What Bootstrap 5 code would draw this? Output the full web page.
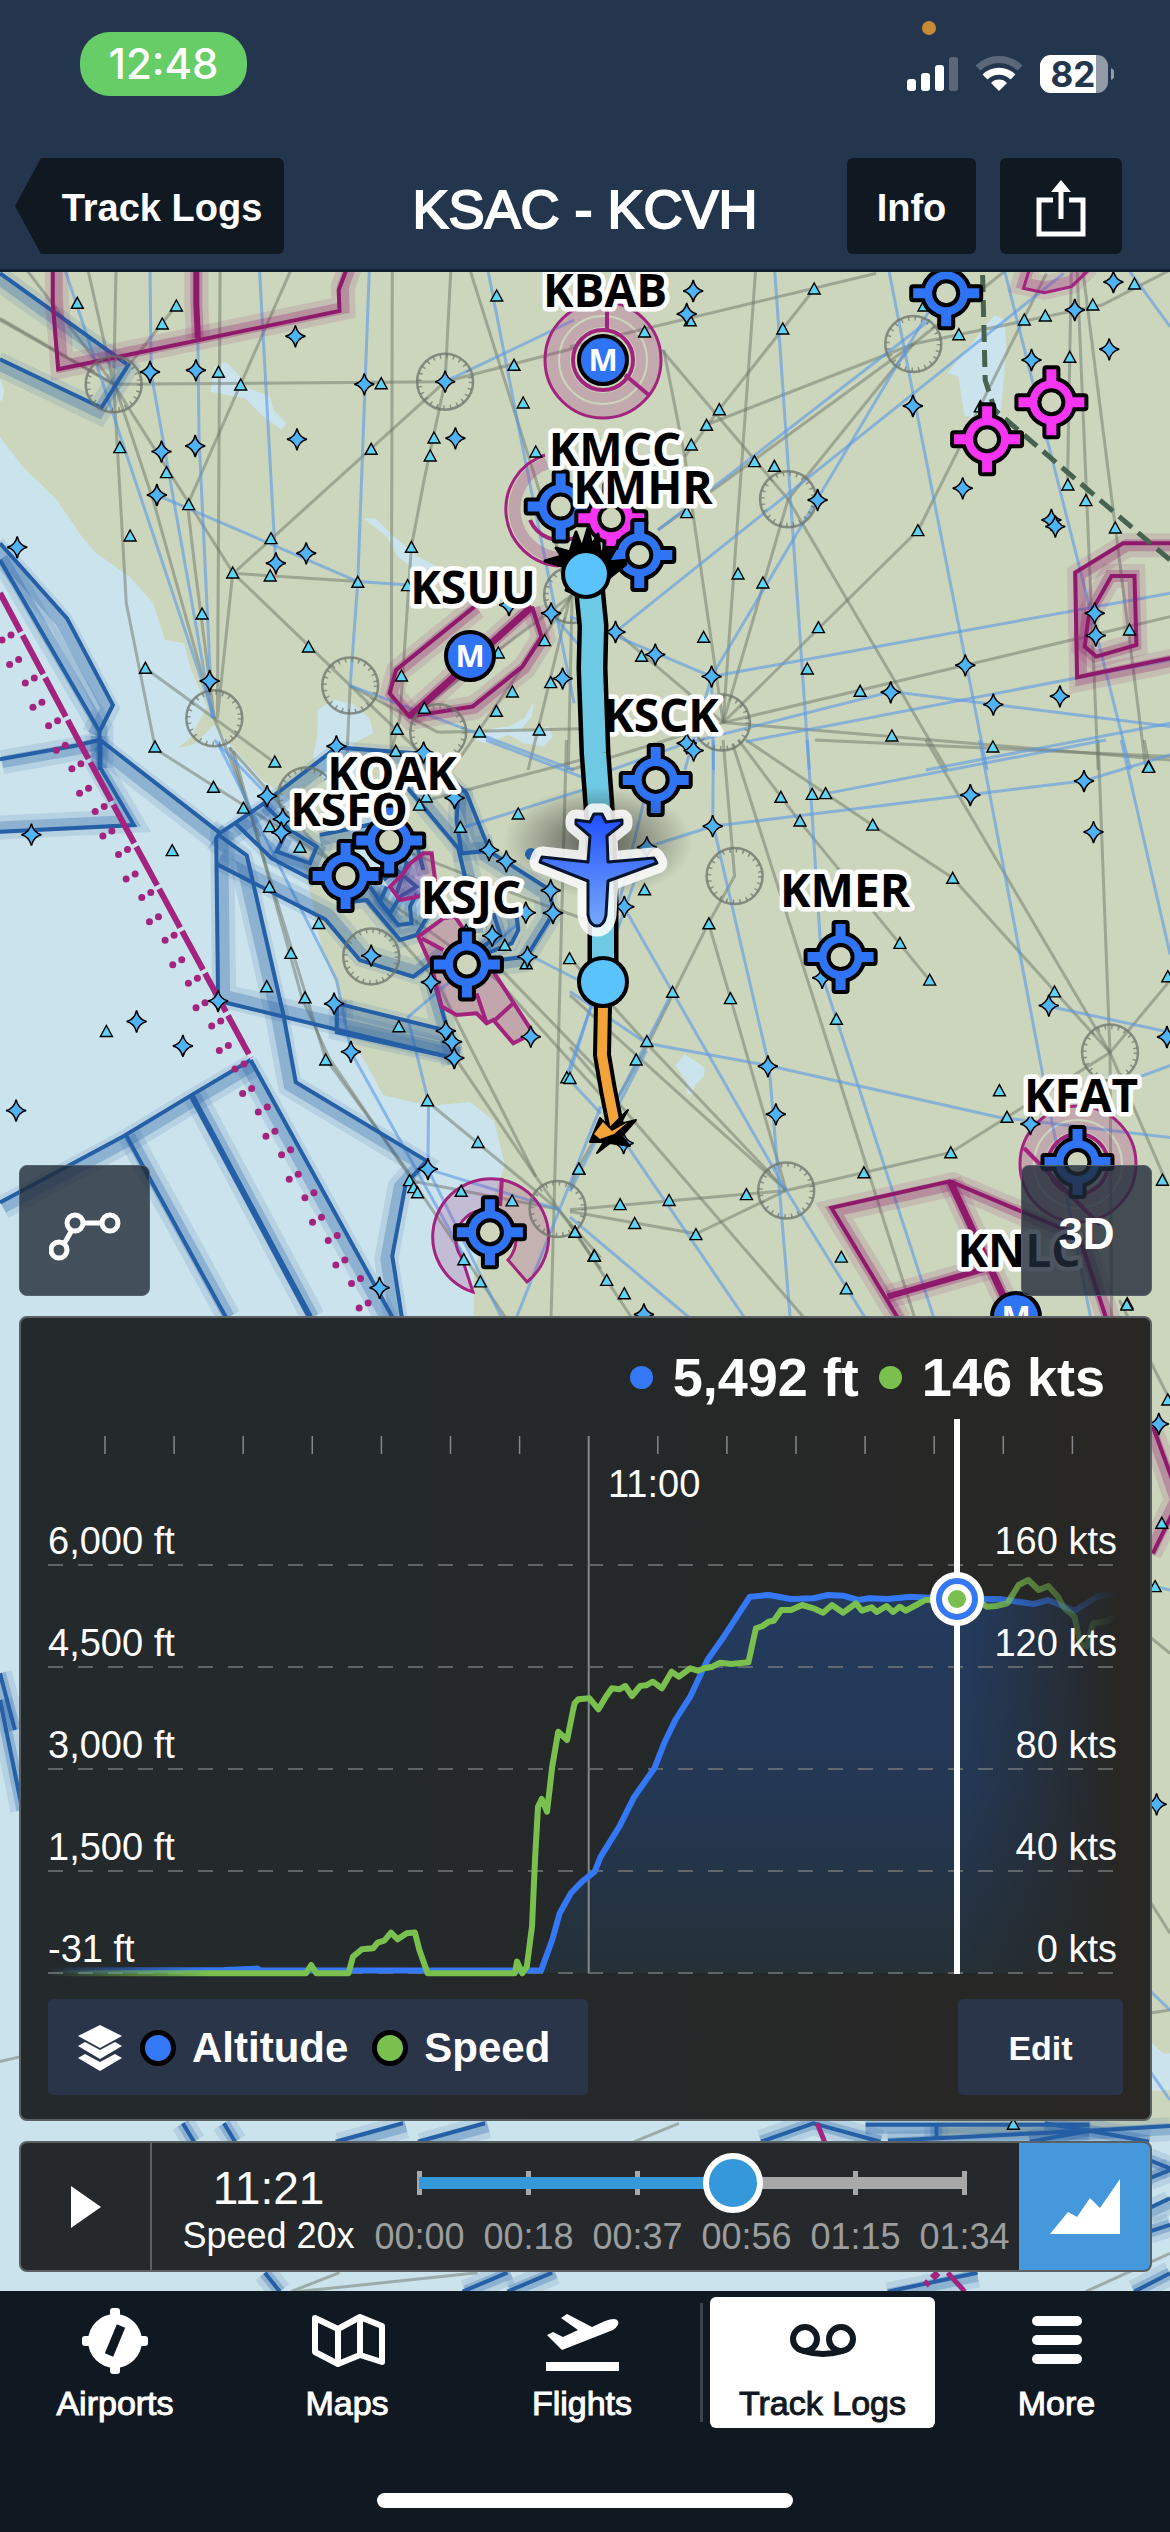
<!DOCTYPE html>
<html lang="en">
<head>
<meta charset="utf-8">
<meta name="viewport" content="width=device-width, initial-scale=1">
<title>Track Logs: KSAC - KCVH</title>
<link href="https://cdn.jsdelivr.net/npm/bootstrap@5.3.0/dist/css/bootstrap.min.css" rel="stylesheet">
<style>
  :root { --navy: #24364e; --ink: #101822; --panel: #25292b; --blue: #3478f6; --green: #7ac04f; --sky: #4598dc; }
  body { font-family: "Liberation Sans", Arial, sans-serif; background: var(--ink); color: #fff; line-height: 1.2; }
  button { font: inherit; }
  .medium { -webkit-text-stroke: 1px currentColor; }
  .topbar { background: var(--navy); border-bottom: 3px solid #14202e; }
  .status { height: 152px; padding: 32px 56px 0 80px; }
  .clock { font: 500 42px/64px Inter, sans-serif; background: #67ce67; border-radius: 30px; width: 167px; }
  .status-icons { padding-top: 22px; }
  .mic-dot { top: 21px; right: 234px; width: 14px; height: 14px; background: #c98a35; }
  .navrow { display: grid; grid-template-columns: 1fr auto 1fr; padding: 6px 48px 15px; align-items: center; }
  .tool-btn { background: var(--ink); color: #fff; border: 0; border-radius: 6px; height: 96px; padding-top: 6px; font-size: 38px; font-weight: 700; }
  .back-btn { margin-left: -33px; padding: 6px 20px 0 45px; width: 269px; clip-path: polygon(26px 0, 100% 0, 100% 100%, 26px 100%, 0 50%); }
  .info-btn { width: 129px; }
  .share-btn { width: 122px; }
  .page-title { font-size: 54px; font-weight: 400; margin: 6px 0 0; -webkit-text-stroke: 2px currentColor; }
  .chart-map { background: #cbe3ec; padding: 0 18px 19px 19px; gap: 20px; }
  .map-svg { inset: 0; width: 100%; height: 100%; }
  .map-btn { width: 131px; height: 131px; border: 1px solid #56616c; border-radius: 8px; background: rgba(32,43,56,.8); color: #fff; font-size: 44px; font-weight: 700; padding-top: 8px; }
  .dark-panel { background: linear-gradient(90deg, #24292b 30%, #282724); border: 2px solid #5b6062; border-radius: 8px; }
  .readout { font-size: 54px; line-height: 64px; font-weight: 700; padding: 27px 45px 0; gap: 20px; }
  .dot { width: 23px; height: 23px; border-radius: 50%; }
  .bg-alt { background: var(--blue); } .bg-spd { background: var(--green); }
  .graph text { font-size: 38px; fill: #fff; }
  .controls { padding: 20px 27px 24px; }
  .ctl-btn { background: #2a3549; color: #fff; border: 0; border-radius: 5px; height: 96px; font-weight: 700; }
  .legend-btn { width: 540px; padding: 2px 28px 0; font-size: 42px; gap: 16px; }
  .edit-btn { width: 165px; font-size: 34px; padding-top: 4px; }
  .ring { width: 36px; height: 36px; border: 5px solid #000; border-radius: 50%; }
  .player { height: 131px; overflow: hidden; background: var(--panel); }
  .play-btn { width: 131px; background: none; border: 0; border-right: 2px solid #5b6062; }
  .play-time { padding: 8px 0 0 20px; font-size: 46px; line-height: 50px; }
  .play-speed { font-size: 36px; line-height: 46px; }
  .scrub { width: 654px; padding-top: 9px; }
  .scrub-track { margin: 0 24px; height: 64px; }
  .ticks { inset: 19px 28px 21px; }
  .ticks i { width: 5px; background: #a8a8a8; }
  .scrub input { appearance: none; -webkit-appearance: none; width: 100%; height: 62px; margin: 0;
    background: linear-gradient(90deg, #3498db 57%, #a8a8a8 57%) center / calc(100% - 60px) 12px no-repeat; }
  .scrub input::-webkit-slider-thumb { -webkit-appearance: none; width: 60px; height: 60px; border-radius: 50%; background: #3498db; border: 6px solid #fff; }
  .times { font-size: 36px; line-height: 42px; color: #9b9d9e; }
  .graph-btn { width: 131px; background: var(--sky); border: 0; }
  .tabbar { display: grid; grid-template-columns: 230fr 234fr 236fr 243fr 227fr; padding-top: 6px; font-size: 34px; line-height: 40px; }
  .tab { color: #fff; text-decoration: none; height: 131px; padding-top: 9px; gap: 7px; }
  .tab svg { height: 70px; width: 84px; }
  .tab-slot { background: linear-gradient(#3b444d, #3b444d) left center / 3px 119px no-repeat; padding: 0 8px 0 10px; }
  .tab-slot .tab { background: #fff; color: var(--ink); border-radius: 6px; }
  .home { width: 416px; height: 15px; border-radius: 8px; background: #fff; margin: 65px auto 24px; }
  .map-label { font: 700 46px "Open Sans", "Noto Sans", sans-serif; fill: #000; stroke: #fff; stroke-width: 9px; stroke-linejoin: round; paint-order: stroke; text-anchor: middle; }
  .m-glyph { font: 700 31px "Open Sans", sans-serif; fill: #fff; text-anchor: middle; }
</style>
<script src="https://cdn.jsdelivr.net/npm/bootstrap@5.3.0/dist/js/bootstrap.bundle.min.js"></script>
</head>
<body>
<div class="d-flex flex-column min-vh-100">
  <header class="topbar">
    <div class="status d-flex justify-content-between align-items-start position-relative">
      <span class="clock text-center">12:48</span>
      <span class="mic-dot position-absolute rounded-circle"></span>
      <svg class="status-icons" width="208" height="62" viewBox="906 54 208 40" aria-label="Signal, Wi-Fi, battery 82%">
        <g fill="#fff"><rect x="907" y="79" width="9" height="12" rx="3"/><rect x="921" y="73" width="9" height="18" rx="3"/><rect x="935" y="65" width="9" height="26" rx="3"/><rect x="949" y="57" width="9" height="34" rx="3" opacity=".25"/>
        <path d="M999 91l-8-8a11 11 0 0 1 16 0z"/></g>
        <path d="M985 77a20 20 0 0 1 28 0" fill="none" stroke="#fff" stroke-width="7"/>
        <path d="M978 68a30 30 0 0 1 42 0" fill="none" stroke="#fff" stroke-width="7" opacity=".25"/>
        <rect x="1040" y="55" width="68" height="38" rx="11" fill="#929aa6"/><path d="M1051 55h45v38h-45a11 11 0 0 1-11-11V66a11 11 0 0 1 11-11z" fill="#fff"/><path d="M1111 68q4 2 4 6t-4 6z" fill="#929aa6"/>
        <text x="1073" y="87" text-anchor="middle" style="font:700 35px Inter,sans-serif" fill="#24364e">82</text>
      </svg>
    </div>
    <nav class="navrow">
      <div><button class="tool-btn back-btn text-nowrap">Track Logs</button></div>
      <h1 class="page-title">KSAC - KCVH</h1>
      <div class="d-flex justify-content-end gap-4">
        <button class="tool-btn info-btn">Info</button>
        <button class="tool-btn share-btn" aria-label="Share"><svg width="52" height="60" viewBox="0 0 52 60" fill="none" stroke="#fff" stroke-width="5"><path d="M18 21H4v34h44V21H34M26 40V10"/><path d="M16 13L26 1l10 12z" fill="#fff" stroke="none"/></svg></button>
      </div>
    </nav>
  </header>

  <main class="chart-map flex-grow-1 position-relative d-flex flex-column justify-content-end overflow-hidden">
    <svg class="map-svg position-absolute" viewBox="0 272 1170 2019" preserveAspectRatio="xMidYMin slice" role="img" aria-label="Aeronautical map of northern California">
      <defs>
        <g id="tri"><path d="M0-6L6 5H-6z" fill="#5fd3f3" stroke="#000" stroke-width="1.4"/></g>
        <g id="star"><path d="M0-11Q2-2 10 0Q2 2 0 11Q-2 2-10 0Q-2-2 0-11z" fill="#4fb4f6" stroke="#000" stroke-width="1.5"/></g>
        <g id="vor" fill="none" stroke="#6b7369"><circle r="28" stroke-width="2.5" opacity=".75"/><circle r="25.500" stroke-width="4" stroke-dasharray="1.500 5.200" opacity=".7"/></g>
        <g id="field"><path d="M-5-33H5V33H-5zM-33-5H33V5H-33z" stroke="#000" stroke-width="8" stroke-linejoin="round"/><circle r="22" stroke="#000" stroke-width="8"/><path d="M-5-33H5V33H-5zM-33-5H33V5H-33z"/><circle r="22"/><circle r="12" fill="#cdd6bd" stroke="#000" stroke-width="4"/></g>
        <linearGradient id="planeFill" x1="0" y1="0" x2="0" y2="1"><stop offset="0" stop-color="#1f50ff"/><stop offset="1" stop-color="#78a8fb"/></linearGradient>
        <radialGradient id="shade"><stop offset="0" stop-color="#222" stop-opacity=".7"/><stop offset="1" stop-color="#222" stop-opacity="0"/></radialGradient>
      </defs>
      <g id="terrain"></g>
      <g id="airways" fill="none" stroke-width="3"></g>
      <g id="airspace" fill="none"></g>
      <g id="marks"></g>
      <g id="fields"></g>
      <g id="route" fill="none" stroke-linejoin="round"></g>
    </svg>

    <div class="position-relative d-flex justify-content-between">
      <button class="map-btn" aria-label="Route"><svg width="72" height="50" viewBox="0 0 72 50" fill="none" stroke="#fff" stroke-width="5"><path d="M15 33l8-14M35 12h19"/><circle cx="10" cy="39" r="8"/><circle cx="26" cy="12" r="8"/><circle cx="61" cy="12" r="8"/></svg></button>
      <button class="map-btn">3D</button>
    </div>

    <section class="dark-panel position-relative">
      <div class="readout d-flex justify-content-end align-items-center">
        <span class="dot bg-alt"></span><span>5,492 ft</span><span class="dot bg-spd"></span><span>146 kts</span>
      </div>
      <svg class="graph d-block w-100" viewBox="21 1409 1129 570" role="img" aria-label="Altitude and speed over time">
        <defs>
          <linearGradient id="area" gradientUnits="userSpaceOnUse" x1="0" y1="1600" x2="0" y2="1973"><stop offset="0" stop-color="#243b5e"/><stop offset=".5" stop-color="#243855"/><stop offset="1" stop-color="#253037"/></linearGradient>
          <linearGradient id="fade" gradientUnits="userSpaceOnUse" x1="48" y1="0" x2="1118" y2="0"><stop offset="0" stop-color="#fff" stop-opacity="0"/><stop offset=".15" stop-color="#fff"/><stop offset=".86" stop-color="#fff"/><stop offset="1" stop-color="#fff" stop-opacity="0"/></linearGradient>
          <mask id="edge" maskUnits="userSpaceOnUse" x="0" y="1400" width="1170" height="600"><rect x="0" y="1400" width="1170" height="600" fill="url(#fade)"/></mask>
        </defs>
        <g id="plot" fill="none" stroke-linejoin="round"></g>
      </svg>
      <div class="controls d-flex justify-content-between">
        <button class="ctl-btn legend-btn d-flex align-items-center">
          <svg width="48" height="46" viewBox="0 0 48 46" fill="#fff"><path d="M24 0L46 11 24 23 2 11z"/><path d="M2 21l7-4 15 8 15-8 7 4-22 13zM2 33l7-4 15 8 15-8 7 4-22 13z"/></svg>
          <span class="ring bg-alt"></span><span>Altitude</span><span class="ring bg-spd ms-2"></span><span>Speed</span>
        </button>
        <button class="ctl-btn edit-btn">Edit</button>
      </div>
    </section>

    <section class="dark-panel player position-relative d-flex">
      <button class="play-btn" aria-label="Play"><svg width="32" height="44" viewBox="0 0 32 44"><path d="M1 1L31 22 1 43z" fill="#fff"/></svg></button>
      <div class="play-time flex-grow-1 d-flex flex-column justify-content-center text-center text-nowrap"><div>11:21</div><div class="play-speed">Speed 20x</div></div>
      <div class="scrub">
        <div class="scrub-track position-relative">
          <div class="ticks position-absolute d-flex justify-content-between"><i></i><i></i><i></i><i></i><i></i><i></i></div>
          <input class="position-relative d-block" id="seek" type="range" min="0" max="5640" value="3243" aria-label="Playback position">
        </div>
        <div class="times d-flex text-center"><span class="col">00:00</span><span class="col">00:18</span><span class="col">00:37</span><span class="col">00:56</span><span class="col">01:15</span><span class="col">01:34</span></div>
      </div>
      <button class="graph-btn" aria-label="Toggle graph"><svg width="70" height="56" viewBox="0 0 70 56"><path d="M0 55L18 33l9 5 13-19 10 10L70 0v55z" fill="#fff"/></svg></button>
    </section>
  </main>

  <footer>
    <nav class="tabbar medium">
      <a class="tab d-flex flex-column align-items-center" href="#"><svg viewBox="0 0 84 70"><g fill="#fff"><circle cx="42" cy="35" r="27"/><rect x="37" y="2" width="10" height="66" rx="3"/><rect x="9" y="30" width="66" height="10" rx="3"/></g><path d="M48 20L36 49" stroke="#101822" stroke-width="9"/></svg><span>Airports</span></a>
      <a class="tab d-flex flex-column align-items-center" href="#"><svg viewBox="0 0 84 70" fill="none" stroke="#fff" stroke-width="6" stroke-linejoin="round"><path d="M10 12l23 11 22-12 22 9v36l-22-7-22 9-23-12zM33 23v34M55 11v38"/></svg><span>Maps</span></a>
      <a class="tab d-flex flex-column align-items-center" href="#"><svg viewBox="0 0 84 70" fill="#fff"><path d="M6 56h73v9H6z"/><path d="M7 29l6-3 10 5 15-7L21 12l6-4 25 13 13-6q11-4 13 0t-5 9L22 44z"/></svg><span>Flights</span></a>
      <div class="tab-slot"><a class="tab d-flex flex-column align-items-center" href="#" aria-current="page"><svg viewBox="0 0 84 70" fill="none" stroke="#101822" stroke-width="6"><circle cx="24" cy="33" r="12"/><circle cx="60" cy="33" r="12"/><path d="M22 45Q42 51 62 45"/></svg><span>Track Logs</span></a></div>
      <a class="tab d-flex flex-column align-items-center" href="#"><svg viewBox="0 0 84 70" fill="#fff"><rect x="17" y="10" width="50" height="10" rx="5"/><rect x="17" y="29" width="50" height="10" rx="5"/><rect x="17" y="48" width="50" height="10" rx="5"/></svg><span>More</span></a>
    </nav>
    <div class="home"></div>
  </footer>
</div>

<script>
// Survey sheets: origin and unit size of each sheet on the map canvas.
const SHEET = {
  NW: [0, 270, .3827, .3333], NE: [570, 270, .3827, .3333],
  SW: [0, 740, .3827, .3699], SE: [570, 740, .3827, .3699],
  BAY: [210, 720, .3333, .3333],
  TOP: [0, 1300, .7462, .3333], LOW: [0, 1700, .7462, .3333], FOOT: [0, 2110, .7462, .3333],
  PX: [0, 0, 1, 1]
};
const $ = id => document.getElementById(id);
const pts = (s, str) => str.trim().split(/\s+/).map(p => {
  const [x, y] = p.split(',').map(Number), [ox, oy, kx, ky] = SHEET[s];
  return [Math.round((ox + x * kx) * 10) / 10, Math.round((oy + y * ky) * 10) / 10];
});
const d = (s, str, close) => 'M' + pts(s, str).map(p => p.join(' ')).join('L') + (close ? 'z' : '');
const add = (id, html) => $(id).insertAdjacentHTML('beforeend', html);
const path = (id, dd, attrs) => add(id, `<path d="${dd}" ${attrs}/>`);

// Land and water
path('terrain', d('PX', '0,437 23,467 57,500 82,537 96,553 130,577 153,603 165,640 184,643 191,670 207,707 191,737 178,748 195,744 214,725 235,750 262,780 290,800 300,850 312,900 322,950 336,985 345,1030 367,1065 383,1095 429,1106 470,1102 494,1121 505,1165 492,1200 474,1273 474,1316 700,1500 1000,1900 1170,2060 1170,270 0,270', 1), 'fill="#ccd6bd"');
path('terrain', d('PX', '0,378 4,390 2,402 0,400', 1), 'fill="#cbe3ec"');
for (const [s, p] of [
  ['NW', '560,290 590,275 620,310 640,350 705,380 715,420 748,460 735,480 680,430 640,385 550,365'],
  ['NW', '950,745 980,745 1030,800 1090,860 1180,910 1170,935 1100,915 1040,860 1010,800'],
  ['NW', '830,1320 870,1290 920,1300 965,1345 950,1400 900,1430 830,1415'],
  ['NW', '1240,1410 1290,1375 1330,1370 1370,1345 1395,1295 1390,1340 1360,1380 1400,1385 1430,1370 1445,1400 1420,1430 1370,1420 1330,1395 1270,1420'],
  ['NE', '1085,170 1110,135 1135,150 1140,240 1125,440 1070,450 1030,435 1015,320 985,310'],
  ['SE', '275,880 300,850 352,885 350,910 325,935 322,960 305,955 305,925'],
  ['BAY', '330,0 480,0 490,40 430,70 440,140 500,220 560,330 640,460 700,540 720,600 640,590 540,540 470,470 420,330 380,260 310,110'],
  ['FOOT', '0,40 1151,40 1180,-100 1568,-170 1568,560 0,560']
]) path('terrain', d(s, p, 1), 'fill="#cbe3ec"');
path('terrain', d('FOOT', '1250,-20 1568,-60 1568,50 1420,80 1260,85', 1), 'fill="#ccd6bd"');

// Low airways (grey) and high airways (blue)
const grey = {
  NW: ['0,145 297,343 1163,335 1500,235', '70,0 297,343 330,1000 405,1430', '230,0 297,343 303,0', '460,107 297,343 610,910 1145,1500', '760,0 490,705 510,900 560,1345', '575,0 568,1345 608,910 935,935', '1025,0 1022,1500', '1178,0 1163,335 1110,620 1075,830 1045,1345 1010,1500', '610,910 1163,335', '1228,0 1495,975', '380,1195 560,1345 720,1480', '300,345 400,690 560,1345 680,1700', '915,1247 905,1500', '1145,1387 1570,1375', '1495,975 1180,1500', '1490,980 1380,1500', '1495,975 1485,1500', '0,150 297,343', '915,1247 1145,1387', '1070,1340 1495,975'],
  NE: ['0,230 800,10', '640,55 390,418 300,560', '240,240 570,688 985,1500', '245,240 300,560 400,1358', '485,0 400,1358', '355,465 897,222 1390,105 1568,0', '230,780 897,222 1140,0', '570,688 897,222', '400,1358 570,688', '400,1358 725,990 910,780 1245,10', '400,1358 1568,1040', '400,1358 1568,1470', '120,1085 400,1358', '1325,0 1380,1500', '1310,0 1300,640', '1340,0 1505,1500', '0,1500 400,1358'],
  SW: ['600,20 850,860 1090,1200', '610,30 790,700 860,860 1320,1560', '600,20 1140,650 1400,1180', '400,20 900,350 1300,650 1570,960', '1090,170 1570,40', '1480,0 1440,1560', '1290,600 1570,900', '1010,280 1380,430 1570,500', '1120,980 1457,1268 1570,1400', '1457,1268 1090,1195', '1190,860 1400,1180 1570,1430'],
  SE: ['400,0 430,368 362,495 200,830 20,1160 0,1210', '362,495 420,700 565,1218', '425,10 900,1560', '440,0 600,220 940,650', '460,0 790,230 1000,373 1411,845', '930,0 1411,845', '1380,0 1411,845 1415,1560', '1411,845 1568,650', '1411,845 995,1115 565,1218', '0,1270 565,1218', '0,1275 330,1335 565,1218', '0,690 565,1218', '0,590 200,820 565,1218', '0,830 610,1560', '1411,845 1560,1200', '640,0 1568,45', '0,1310 160,1560', '1500,0 1510,50'],
  TOP: ['1500,0 1568,300', '1535,1000 1568,1060'], LOW: ['1540,600 1568,700', '1540,940 1568,930', '0,1085 28,1070'], FOOT: ['910,40 850,95', '390,545 455,488', '400,545 640,488', '1455,545 1568,430']
};
const blue = {
  NW: ['170,0 560,1345', '392,0 395,310 555,1345', '515,0 520,500 550,1230', '678,0 720,870', '965,0 935,935 915,1247', '1275,0 1360,500 1500,1300', '410,675 935,935 1070,945', '1163,335 1500,150', '915,1247 1500,1500', '1440,1030 1570,1200'],
  NE: ['535,0 625,1500', '833,0 1090,1500', '1135,0 1465,1500', '120,1085 1290,10', '230,780 940,150', '370,1220 645,690 940,120', '0,1040 370,1220 1568,970', '305,1420 840,1265 1568,1370', '460,1415 1568,1170', '930,1500 1568,1360', '370,1220 375,1500', '370,1220 300,1500', '1460,0 1568,170'],
  SW: ['570,10 880,650 918,845 1210,1390', '560,0 700,150', '1065,750 1120,980 1118,1160', '1118,1160 1457,1268', '1065,750 1350,500', '1380,580 1570,680', '1480,910 1545,720', '1200,240 1570,120', '1570,990 1350,1560', '1480,910 1570,1010', '1118,1160 1310,1560', '1270,0 1570,120'],
  SE: ['375,0 373,233 1045,148 1345,110 1568,40', '373,233 200,290', '200,290 60,700 0,900', '375,233 520,880 575,1560', '620,0 660,640 950,1560', '1070,0 1240,930 1360,1560', '1440,0 1568,580', '668,145 1400,0', '0,680 200,820 517,880 1120,1020 1568,1075', '140,450 565,1218 770,1560', '145,1090 455,1560', '268,680 0,1220', '200,840 90,1060', '1250,720 1568,790', '1490,910 1568,880', '0,1290 310,1560', '30,110 300,10', '100,560 225,30'],
  TOP: ['1540,855 1568,870'], LOW: ['1540,870 1568,930', '1540,1110 1568,1200']
};
for (const s in grey) grey[s].forEach(p => path('airways', d(s, p), 'stroke="#6c7568" stroke-opacity=".5"'));
for (const s in blue) blue[s].forEach(p => path('airways', d(s, p), 'stroke="#5a97e6" stroke-opacity=".6"'));

// Bordered airspace: soft band shifted inwards, then the edge line
const zone = (s, p, col, dx, dy, close, w = 4) => {
  const q = d(s, p, close);
  path('airspace', q, `stroke="${col}" stroke-opacity=".13" stroke-width="24" transform="translate(${dx} ${dy})"`);
  path('airspace', q, `stroke="${col}" stroke-opacity=".28" stroke-width="12" transform="translate(${dx} ${dy})"`);
  path('airspace', q, `stroke="${col}" stroke-width="${w}"`);
};
const B = '#255fa6', V = '#8f1a6b', M = '#a3247f';
zone('NW', '0,10 335,285 265,413 0,268', B, -3, 4);
zone('NW', '138,0 138,100 152,298 887,123 885,60 905,0', V, 4, -3);
zone('NW', '513,0 513,100 517,205', V, 0, 0, 0, 6);
zone('NW', '0,820 175,1045 295,1305 260,1385', B, -6, 3);
zone('NW', '0,870 260,1385 260,1500', B, 2, -2);
zone('SW', '0,52 200,15 260,0', B, 2, 3);
zone('SW', '262,0 262,75 350,230 0,248', B, -3, -4);
zone('SW', '262,0 575,252', B, -3, 6);
zone('SW', '575,252 565,265 570,705 1187,860', B, 6, -5);
zone('SW', '575,260 645,312 740,740 773,925 1115,1138 1060,1200 1025,1395 1050,1560', B, -6, 3);
zone('SW', '575,252 685,175 880,20 1110,38', B, 3, 6);
zone('SW', '565,335 850,485 940,595 1080,640 1150,585', B, 3, -5);
zone('SW', '615,225 710,320 820,380', B, 4, -4);
zone('SW', '655,865 500,960 325,1070 0,1250', B, 3, 5);
zone('SW', '655,865 1025,1560', B, -5, 3);
zone('SW', '500,960 810,1560', B, 3, 0, 0, 6);
zone('SW', '330,1070 590,1560', B, 3, 0);
zone('SW', '880,712 1165,785 1190,860 1130,640', B, -2, 5);
zone('SW', '880,712 880,790 1187,860', B, 4, -3);
zone('BAY', '590,200 745,385 765,470 790,640', B, 4, 0);
zone('BAY', '640,95 770,220 840,395 1020,510 1030,580 950,710 870,720', B, -5, 4);
zone('BAY', '745,215 740,300 755,400 840,392', B, 3, -4);
zone('BAY', '160,250 240,330 320,380 300,430 200,395 225,345', B, 2, 3);
zone('BAY', '330,345 450,320 540,300 620,370 640,450', B, 0, 5);
zone('BAY', '430,545 470,540 570,660 620,645 670,560', B, 0, -4);
zone('BAY', '480,500 520,560 565,615 605,610 600,560 620,520', B, 0, -3);
zone('BAY', '520,480 560,450 620,500 570,530 540,580 510,545 530,500', B, 0, 0);
zone('BAY', '540,350 590,430 560,520', B, 0, 0);
zone('BAY', '850,580 870,640 820,680', B, 0, 0);
zone('BAY', '920,590 925,630 905,670 830,700', B, -4, -3);
zone('NW', '1240,1010 1035,1200 1018,1270 1070,1340 1235,1310 1365,1190 1415,1100 1390,1010', V, 2, 1);
zone('NW', '1070,1340 1390,1010', V, 0, 0, 0, 7);
zone('NE', '1568,820 1445,820 1320,908 1325,1222 1568,1165', V, 4, 2);
zone('NE', '1415,918 1475,918 1480,1125 1375,1160 1345,1130 1355,1040', V, -1, 0, 1);
zone('NE', '1200,0 1185,55 1240,68 1310,50 1355,0', M, 0, -5, 0, 3);
zone('SE', '855,1560 683,1265 993,1193 1330,1340 1400,1560', V, 3, 3);
zone('SE', '993,1193 1135,1510', V, 0, 0, 0, 7);
zone('SE', '830,1505 1100,1425', V, 0, 0, 0, 6);
zone('TOP', '1545,380 1568,520 1580,600 1545,760', V, -3, 0);
zone('TOP', '0,1120 20,1290', B, 0, 0); zone('LOW', '0,0 30,330', B, 0, 0);
zone('FOOT', '245,40 260,95', B, 0, 0); zone('FOOT', '300,40 315,95', B, 0, 0);
zone('FOOT', '450,95 540,40', B, 3, 3); zone('FOOT', '560,95 650,40', B, 3, 3);
zone('FOOT', '1020,95 1090,40 1180,95', B, 0, 0); zone('FOOT', '1160,44 1460,44', B, 0, 3);
zone('FOOT', '1190,92 1460,62 1568,48', B, 0, 3); zone('FOOT', '1255,40 1255,85', B, 0, 0);
zone('FOOT', '1380,95 1460,62 1540,95', B, 0, 0); zone('FOOT', '1400,40 1460,62', B, 0, 0);
zone('FOOT', '355,488 375,545', B, 0, 0); zone('FOOT', '620,545 680,488', B, 3, 0); zone('FOOT', '680,545 740,488', B, 3, 0);
zone('FOOT', '1190,545 1310,488', B, 0, 3); zone('FOOT', '1520,545 1568,490', B, 0, 0);
zone('FOOT', '1540,150 1568,175', B, 0, 0); zone('FOOT', '1540,205 1568,180', B, 0, 0); zone('FOOT', '1540,295 1568,265', B, 0, 4); zone('FOOT', '1540,365 1568,345', B, 0, 0);
path('airspace', d('FOOT', '1095,40 1105,95'), `stroke="${M}" stroke-width="5"`);
path('airspace', d('FOOT', '1270,488 1293,545'), `stroke="${M}" stroke-width="5"`);
path('airspace', d('FOOT', '1257,488 1240,525'), `stroke="${M}" stroke-width="7" stroke-dasharray="8 5"`);
// Offshore boundary with its twin dots
path('airspace', 'M0 593L82 747 251 1058', `stroke="${M}" stroke-width="6" stroke-dasharray="44 4"`);
for (let i = 0; i < 32; i++) {
  const x = 2 + i * 11.65 - (i % 2 ? 4 : 0), y = 640 + i * 21.45 + (i % 2 ? 3 : 0);
  add('airspace', `<circle cx="${x}" cy="${y}" r="3.500" fill="${M}"/><circle cx="${x + 9}" cy="${y - 5}" r="3.500" fill="${M}"/>`);
}
path('airspace', d('NE', '1078,15 1085,330 1110,420 1568,870'), 'stroke="#47634f" stroke-width="5" stroke-dasharray="17 8"');

// Controlled rings
const ring = (x, y, r, inner) => {
  add('airspace', `<circle cx="${x}" cy="${y}" r="${r - 7}" stroke="${M}" stroke-opacity=".25" stroke-width="12"/><circle cx="${x}" cy="${y}" r="${r}" stroke="${M}" stroke-width="3"/><circle cx="${x}" cy="${y}" r="${inner + 8}" stroke="${M}" stroke-opacity=".25" stroke-width="10"/><circle cx="${x}" cy="${y}" r="${inner}" stroke="${M}" stroke-width="4"/>`);
};
ring(603, 360, 58, 30); ring(1078, 1164, 58, 30);
path('airspace', 'M607 330V308M625 375L650 396M1024 1148L1100 1225', `stroke="${M}" stroke-width="4"`);
path('airspace', 'M545 455A57 57 0 0 0 559 566', `stroke="${M}" stroke-width="3"`);
path('airspace', 'M547 463A49 49 0 0 0 560 558', `stroke="${M}" stroke-opacity=".28" stroke-width="12"`);
path('airspace', 'M530 520A34 34 0 0 0 574 538', `stroke="${M}" stroke-width="4"`);
path('airspace', 'M473 1292A58 58 0 1 1 527 1282L508 1260A30 30 0 1 0 462 1258z', `stroke="${M}" stroke-width="3" fill="${M}" fill-opacity=".2"`);
path('airspace', 'M502 1178L500 1206', `stroke="${M}" stroke-width="4"`);
path('airspace', d('BAY', '625,650 700,595 735,590 770,640 860,770 970,940 910,970 850,900 830,910 800,880 740,885 695,860 665,740', 1), `stroke="${M}" stroke-width="4" fill="${M}" fill-opacity=".27"`);
path('airspace', d('BAY', '600,430 640,400 665,400 678,500 625,530 570,540 540,500 580,460', 1), `stroke="${M}" stroke-width="4" fill="${M}" fill-opacity=".25"`);
path('airspace', d('BAY', '635,655 700,690') + d('BAY', '855,900 910,850') + d('BAY', '800,820 830,910'), `stroke="${M}" stroke-width="4"`);

// Waypoints
const put = (id, sym, s, str, extra = '') => pts(s, str).forEach(([x, y]) => add(id, `<use href="#${sym}" x="${x}" y="${y}" ${extra}/>`));
put('marks', 'vor', 'NW', '297,343 1163,335 560,1345 915,1247 1495,975 1145,1387');
put('marks', 'vor', 'NE', '897,222 570,688 397,1358');
put('marks', 'vor', 'SW', '970,585 1457,1268 800,150');
put('marks', 'vor', 'SE', '430,368 565,1218 1411,845');
put('marks', 'tri', 'NW', '202,100 461,108 424,162 571,307 629,345 996,341 1298,78 1343,286 1367,399 1400,546 1134,504 1124,558 970,538 313,533 435,608 493,704 340,798 708,806 608,909 706,918 935,937 1065,947 1075,832 528,1032 380,1195 806,1131 405,1431 718,1476 1049,1218 1109,1315 1038,1378 1034,1444 1253,1386 1297,1324 1339,1266 1302,1149 1423,1112 1439,1238 1409,1380');
put('marks', 'tri', 'NE', '638,57 314,152 195,186 556,177 390,419 357,466 317,525 482,575 534,589 305,728 439,912 504,939 349,1102 187,1159 620,1197 649,1073 909,782 758,1264 841,1398 1105,1431 1016,194 1187,150 1242,138 1306,262 1366,105 1475,42 1301,645 1348,692 1425,774 1462,1080 1512,1490 925,108 1072,410');
put('marks', 'tri', 'SW', '558,128 636,184 705,234 784,290 450,299 704,398 833,496 760,577 697,667 797,697 278,788 851,865 1042,775 1096,176 1114,154 1203,236 1354,200 1319,555 1375,605 1488,591 1481,913 1117,975 1249,1088 1070,1191 1081,1210 1091,1224 1205,1220 1338,1246 1212,1405 1255,1465 1513,1160 1503,1331 1552,1395 1218,515');
put('marks', 'tri', 'SE', '551,155 633,147 668,145 601,219 791,230 195,405 363,497 268,682 419,699 201,815 173,865 0,915 696,755 862,550 940,649 1000,374 1266,681 1122,948 1142,1020 995,1116 768,1170 461,1229 259,1245 131,1256 169,1307 329,1337 23,1160 13,1331 64,1395 96,1461 142,1497 709,1398 722,1484 1456,1524 1548,1190 1512,74 1562,640');
put('marks', 'tri', 'TOP', '1510,15 1565,300 1557,670 1548,860'); put('marks', 'tri', 'FOOT', '1358,43');
put('marks', 'star', 'NW', '772,199 392,306 512,301 952,343 1163,335 422,545 510,528 776,508 1190,505 410,675 45,832 800,850 721,880 548,1233 879,1429 1107,1448 1440,1030 1470,1226 1330,1005');
put('marks', 'star', 'NE', '322,63 305,132 896,408 647,690 1026,655 1206,270 1319,120 1420,36 1409,238 1258,750 1268,770 119,1086 223,1154 370,1220 305,1420 323,1442 838,1267 1033,1186 1106,1304 1280,1279 1371,1030 1374,1097');
put('marks', 'star', 'SW', '82,256 357,761 478,827 42,1002 570,706 698,152 739,214 735,250 970,583 873,713 917,843 1126,655 1165,787 1181,816 1187,860 1387,802 1278,298 1323,328 1439,407 1445,468 1374,467 1286,529 1378,586 1188,157 1118,1160 992,1481');
put('marks', 'star', 'SE', '142,451 201,290 373,233 1046,149 1343,111 1368,249 1251,718 1560,803 517,882 538,1012 1203,1038 659,643 193,1553 140,1090');
put('marks', 'star', 'TOP', '1553,372'); put('marks', 'star', 'LOW', '1550,313');

// Airports and labels
put('fields', 'field', 'NW', '1465,710', 'fill="#2f74f4"');
put('fields', 'field', 'NE', '1090,508 1258,397 108,745', 'fill="#f635f2"');
put('fields', 'field', 'NE', '983,70 181,855 224,1530', 'fill="#2f74f4"');
put('fields', 'field', 'SW', '1017,272 903,368 1220,607 1280,1331', 'fill="#2f74f4"');
put('fields', 'field', 'SE', '707,587 1326,1141', 'fill="#2f74f4"');
[[603, 360], [470, 656], [1016, 1317]].forEach(([x, y]) => add('fields', `<circle cx="${x}" cy="${y}" r="24" fill="#2f74f4" stroke="#000" stroke-width="4"/><text class="m-glyph" x="${x}" y="${y + 11}">M</text>`));
[['KBAB', 605, 307], ['KMCC', 615, 466], ['KMHR', 643, 504], ['KSUU', 473, 604], ['KSCK', 661, 732], ['KSFO', 349, 826], ['KOAK', 392, 790], ['KSJC', 471, 914], ['KMER', 845, 907], ['KFAT', 1081, 1112], ['KNLC', 1019, 1267]]
  .forEach(([t, x, y]) => add('fields', `<text class="map-label" x="${x}" y="${y}">${t}</text>`));

// Flown track and aircraft
path('route', 'M586 574L562 566 545 561 562 556 556 548 570 552 576 532 582 548 588 528 592 546 598 534 600 552 616 548 608 562 628 560 614 568 626 564 604 582 580 596 566 590 572 582z', 'fill="#000" stroke="#000" stroke-width="3"');
const flown = 'M588 575L593 626 592 668 595 753 600 820 603 900V982', ahead = 'M603 982V1005L602 1055 608 1090 616 1130';
path('route', flown, 'stroke="#000" stroke-width="31"'); path('route', flown, 'stroke="#6ecae4" stroke-width="22"');
add('route', '<ellipse cx="598" cy="842" rx="95" ry="56" fill="url(#shade)"/>');
path('route', ahead, 'stroke="#000" stroke-width="18"'); path('route', ahead, 'stroke="#f2a33a" stroke-width="10"');
path('route', 'M590 1142L600 1118 610 1128 628 1110 620 1124 636 1120 622 1136 630 1146 610 1143 597 1153 604 1142z', 'fill="#000" stroke="#000" stroke-width="2"');
path('route', 'M594 1134L603 1122 612 1131 628 1122 614 1134 600 1139z', 'fill="#f2a33a"');
add('route', '<circle cx="586" cy="574" r="23" fill="#5ac3fb" stroke="#000" stroke-width="4"/><circle cx="603" cy="982" r="24" fill="#5ac3fb" stroke="#000" stroke-width="4"/><circle cx="531" cy="854" r="6" fill="#255fa6"/>');
const plane = 'M594 814H602L606 822 622 820V824L607 836 608 862 654 858 657 863 608 881 606 915Q604 926 597 926T588 915L588 881 540 862 542 857 588 862 590 836 576 824V820L590 822z';
path('route', plane, 'stroke="#fff" stroke-opacity=".85" stroke-width="21"');
path('route', plane, 'fill="url(#planeFill)" stroke="#06142e" stroke-width="3"');

// Flight graph
const alt = d('LOW', '65,812 300,810 345,806 350,812 725,812 740,720 750,640 765,580 780,545 797,515 805,470 830,380 850,290 877,205 890,130 905,60 925,-10 948,-120 970,-190 1005,-310 1030,-315 1060,-303 1090,-305 1110,-315 1130,-313 1150,-300 1165,-305 1190,-303 1220,-310 1282,-302 1340,-303 1385,-288 1405,-300 1440,-268 1470,-310 1495,-320');
const spd = d('LOW', '65,820 410,820 417,795 424,820 467,820 473,770 485,748 500,745 506,728 515,722 524,698 533,718 545,700 556,698 562,750 573,820 690,820 693,785 700,820 706,800 713,680 717,480 721,320 726,297 733,335 740,200 748,95 760,120 768,30 770,10 775,-2 790,-5 802,28 812,-10 820,-35 830,-32 838,-42 847,-12 858,-42 866,-44 875,-55 887,-35 900,-85 910,-70 925,-95 935,-88 945,-96 955,-100 965,-112 980,-108 1003,-113 1013,-215 1022,-222 1030,-235 1037,-238 1047,-270 1060,-270 1075,-285 1090,-275 1103,-262 1115,-285 1130,-262 1147,-290 1155,-268 1168,-278 1175,-264 1188,-282 1197,-264 1206,-280 1214,-268 1228,-285 1240,-300 1282,-302 1310,-300 1322,-280 1335,-282 1350,-290 1365,-345 1378,-360 1392,-330 1405,-342 1418,-310 1425,-280 1440,-250 1448,-170 1456,-160 1465,-230 1480,-235 1495,-250');
path('plot', alt + 'V1973H48z', 'fill="url(#area)" mask="url(#edge)"');
for (let i = 0; i < 15; i++) path('plot', `M${105 + i * 69.1} 1436V${i === 7 ? 1973 : 1454}`, `stroke="#84888a" stroke-width="${i === 7 ? 2 : 1.5}"`);
['6,000 ft|160 kts', '4,500 ft|120 kts', '3,000 ft|80 kts', '1,500 ft|40 kts', '-31 ft|0 kts'].forEach((row, i) => {
  const [l, r] = row.split('|'), y = 1565 + i * 102;
  path('plot', `M48 ${y}H1116`, 'stroke="#74797b" stroke-width="1.5" stroke-dasharray="15 15"');
  add('plot', `<text x="48" y="${y - 11}">${l}</text><text x="1117" y="${y - 11}" text-anchor="end">${r}</text>`);
});
add('plot', '<text x="608" y="1497">11:00</text>');
path('plot', alt, 'stroke="#3478f6" stroke-width="6" mask="url(#edge)"');
path('plot', spd, 'stroke="#7ac04f" stroke-width="6" mask="url(#edge)"');
path('plot', 'M957 1419V1974', 'stroke="#fff" stroke-width="6"');
add('plot', '<circle cx="957" cy="1599" r="27" fill="#fff"/><circle cx="957" cy="1599" r="18" fill="#fff" stroke="#3478f6" stroke-width="6"/><circle cx="957" cy="1599" r="9" fill="#7ac04f"/>');
</script>
</body>
</html>
